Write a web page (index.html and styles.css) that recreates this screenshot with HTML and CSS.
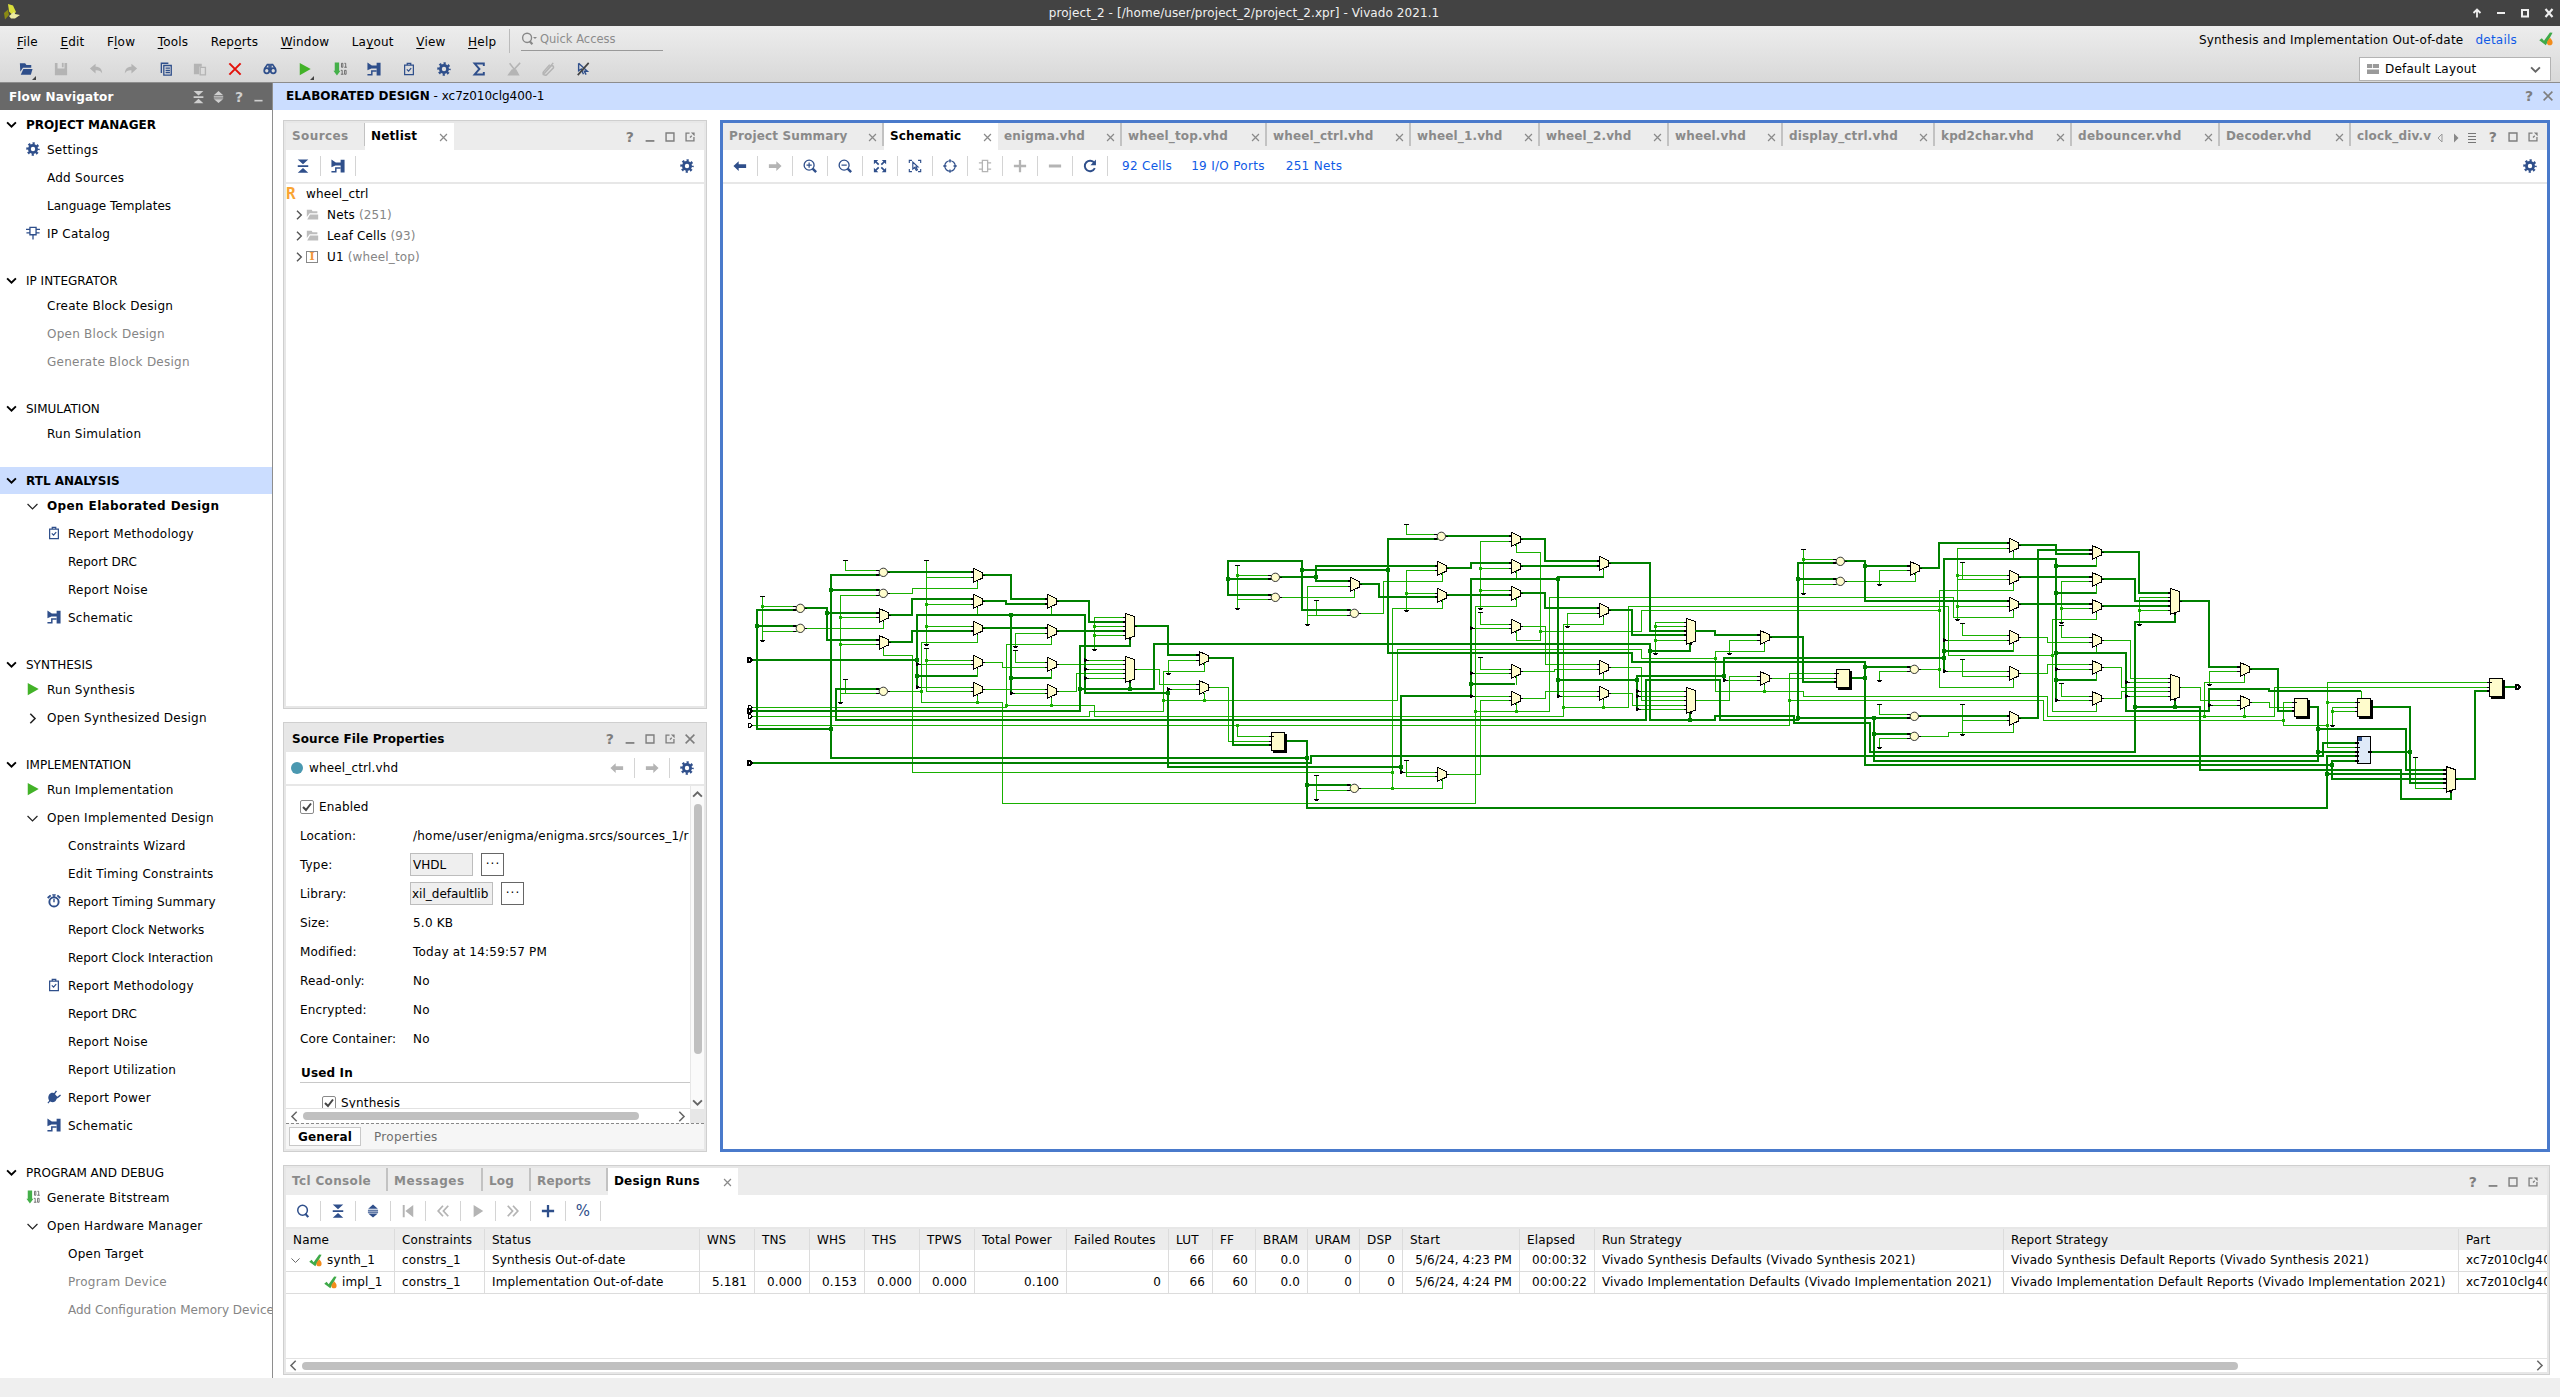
FILE: index.html
```html
<!DOCTYPE html>
<html lang="en">
<head>
<meta charset="utf-8">
<title>project_2 - Vivado 2021.1</title>
<link rel="stylesheet" href="styles.css">
</head>
<body>
<svg class="sprite" aria-hidden="true">
  <symbol id="gear" viewBox="0 0 16 16"><circle cx="8" cy="8" r="4.1" fill="none" stroke="currentColor" stroke-width="3.2"/><circle cx="8" cy="8" r="6.4" fill="none" stroke="currentColor" stroke-width="2.6" stroke-dasharray="2.51 2.51" stroke-dashoffset="1.25"/></symbol>
  <symbol id="chip" viewBox="0 0 16 16"><path d="M4.500 1.500h7v8.500h-7zM8 10v5.500M0 3.800h4.500M11.500 3.800H16M.5 7.800h4M11.500 7.800h4" fill="none" stroke="currentColor" stroke-width="1.500"/></symbol>
  <symbol id="clip" viewBox="0 0 16 16"><path d="M3 3.500h10v11H3zM6 1.500h4v2H6zM5.500 8.500l2 2 3-3.500" fill="none" stroke="currentColor" stroke-width="1.400"/></symbol>
  <symbol id="schem" viewBox="0 0 16 16"><path d="M.5.5L5.500 4H11V.8h4.500v14.700H11V7.500H5L.5 9.500z" fill="currentColor"/><path d="M.5 14.500h5v-4.300H11" fill="none" stroke="currentColor" stroke-width="1.700"/></symbol>
  <symbol id="play" viewBox="0 0 16 16"><path d="M2 1l12.500 7L2 15z" fill="#42b228"/></symbol>
  <symbol id="bits" viewBox="0 0 16 16"><path d="M2 .5h5v9.500h1.500l-4 5.500L.5 10H2z" fill="#45b04a"/><path d="M9.700 1.500h1.600v4.500H9.700zM13 1.500h1.500v4.500M12.800 6h3M9 9.500h1.500V14M9 14h3M13.200 9.500h1.800V14h-1.800z" fill="none" stroke="#555" stroke-width=".9"/></symbol>
  <symbol id="clock" viewBox="0 0 16 16"><circle cx="8" cy="9" r="5.300" fill="none" stroke="currentColor" stroke-width="2.200"/><path d="M8 5.500V9.500M6 1h4M8 1v3" fill="none" stroke="currentColor" stroke-width="1.600"/><path d="M.8 4.600l3.400-3M15.200 4.600l-3.400-3" stroke="currentColor" stroke-width="2.200"/></symbol>
  <symbol id="plug" viewBox="0 0 16 16"><path d="M2.500 5c2-2.500 5-2.300 6.500-.5l3.500 4c-2 .5-1.500 5.500-6 5.500-2 0-3-.8-3-.8L1.500 15.500.5 14.500l2-2.300C1 9.500 1.200 7 2.500 5z" fill="currentColor"/><path d="M8 5l2.800-4M11.500 9l4-3.300" stroke="currentColor" stroke-width="1.600"/></symbol>
  <symbol id="down" viewBox="0 0 10 10"><path d="M1 3l4 4 4-4" fill="none" stroke="currentColor" stroke-width="1.700"/></symbol>
  <symbol id="down1" viewBox="0 0 10 10"><path d="M.5 2.700l4.500 4.500 4.500-4.500" fill="none" stroke="currentColor" stroke-width="1.100"/></symbol>
  <symbol id="right" viewBox="0 0 10 10"><path d="M3 .7l4.300 4.300L3 9.300" fill="none" stroke="currentColor" stroke-width="1.400"/></symbol>
  <symbol id="left" viewBox="0 0 10 10"><path d="M7 .7l-4.300 4.300L7 9.300" fill="none" stroke="currentColor" stroke-width="1.400"/></symbol>
  <symbol id="up" viewBox="0 0 10 10"><path d="M1 7l4-4 4 4" fill="none" stroke="currentColor" stroke-width="1.700"/></symbol>
  <symbol id="collapse" viewBox="0 0 16 16"><path d="M2 .5h12L8 6zM2 7h12v2.200H2zM2 15.700h12L8 10.200z" fill="currentColor"/></symbol>
  <symbol id="expand" viewBox="0 0 16 16"><path d="M8 .5l5.500 5h-11zM2.200 6.500h11.600v1.200H2.200zM2.200 8.700h11.600v1.200H2.200zM8 15.500l5.500-4.600h-11z" fill="currentColor"/></symbol>
  <symbol id="minus" viewBox="0 0 16 16"><path d="M3 12.500h10" stroke="currentColor" stroke-width="2"/></symbol>
  <symbol id="square" viewBox="0 0 16 16"><path d="M3.500 3.500h9v9h-9z" fill="none" stroke="currentColor" stroke-width="1.600"/></symbol>
  <symbol id="popout" viewBox="0 0 16 16"><path d="M7.500 3.500h-4v9h9V8M8 8.500l2-2" fill="none" stroke="currentColor" stroke-width="1.500"/><path d="M9 2.800h4.300v4.200z" fill="currentColor"/></symbol>
  <symbol id="x" viewBox="0 0 16 16"><path d="M3 3l10 10M13 3L3 13" fill="none" stroke="currentColor" stroke-width="1.800"/></symbol>
  <symbol id="aleft" viewBox="0 0 16 16"><path d="M.5 8l6-5.500V6H15v4.200H6.500v3.500z" fill="currentColor"/></symbol>
  <symbol id="aright" viewBox="0 0 16 16"><path d="M15.500 8l-6-5.500V6H1v4.200h8.500v3.500z" fill="currentColor"/></symbol>
  <symbol id="search" viewBox="0 0 16 16"><ellipse cx="7.500" cy="7.200" rx="5.500" ry="5.700" fill="none" stroke="currentColor" stroke-width="1.700"/><path d="M10.500 11l3.500 4" stroke="currentColor" stroke-width="2.600"/></symbol>
  <symbol id="zin" viewBox="0 0 16 16"><circle cx="7" cy="7" r="5.700" fill="none" stroke="currentColor" stroke-width="1.500"/><path d="M7 4v6M4 7h6" stroke="currentColor" stroke-width="1.400"/><path d="M11 11l4 4" stroke="currentColor" stroke-width="2.800"/></symbol>
  <symbol id="zout" viewBox="0 0 16 16"><circle cx="7" cy="7" r="5.700" fill="none" stroke="currentColor" stroke-width="1.500"/><path d="M4 7h6" stroke="currentColor" stroke-width="1.400"/><path d="M11 11l4 4" stroke="currentColor" stroke-width="2.800"/></symbol>
  <symbol id="fit" viewBox="0 0 16 16"><path d="M1 1h5L1 6zM15 1v5l-5-5zM1 15v-5l5 5zM15 15h-5l5-5z" fill="currentColor"/><path d="M2 2l4.500 4.500M14 2L9.500 6.500M2 14l4.500-4.500M14 14L9.500 9.500" stroke="currentColor" stroke-width="2"/></symbol>
  <symbol id="pick" viewBox="0 0 16 16"><path d="M1.500 4.500v-3h3M11.500 1.500h3v3M1.500 11.500v3h3M11.500 14.500h3v-3M5.500 3.500v8l2-1.800 2 3.500 1.300-.8-1.800-3.200h2.500z" fill="none" stroke="currentColor" stroke-width="1.300"/></symbol>
  <symbol id="target" viewBox="0 0 16 16"><circle cx="8" cy="8" r="6" fill="none" stroke="currentColor" stroke-width="1.400"/><path d="M8 .3v3.700M8 12v3.700M.3 8H4M12 8h3.700" stroke="currentColor" stroke-width="1.500"/></symbol>
  <symbol id="cell" viewBox="0 0 16 16"><path d="M5 1.500h6v13H5zM1 4.500h4M1 11.500h4M11 4.500h4M11 11.500h4" fill="none" stroke="currentColor" stroke-width="1.500"/></symbol>
  <symbol id="plus" viewBox="0 0 16 16"><path d="M8 1v14M1 8h14" stroke="currentColor" stroke-width="2.600"/></symbol>
  <symbol id="dash" viewBox="0 0 16 16"><path d="M1 8h14" stroke="currentColor" stroke-width="3.400"/></symbol>
  <symbol id="reload" viewBox="0 0 16 16"><path d="M13.500 10.500a6 6 0 1 1-.5-6" fill="none" stroke="currentColor" stroke-width="2.200"/><path d="M14.800 .5v6.500H8.500z" fill="currentColor"/></symbol>
  <symbol id="first" viewBox="0 0 16 16"><path d="M2 1h2.200v14H2zM14 1v14L5 8z" fill="currentColor"/></symbol>
  <symbol id="rew" viewBox="0 0 16 16"><path d="M8 2L2.500 8 8 14M14 2L8.500 8l5.500 6" fill="none" stroke="currentColor" stroke-width="2"/></symbol>
  <symbol id="ffw" viewBox="0 0 16 16"><path d="M8 2l5.500 6L8 14M2 2l5.500 6L2 14" fill="none" stroke="currentColor" stroke-width="2"/></symbol>
  <symbol id="step" viewBox="0 0 16 16"><path d="M3 1l11 7-11 7z" fill="currentColor"/></symbol>
  <symbol id="check" viewBox="0 0 16 16"><path d="M.3 9.500l2.900-2.300 2.500 2.800L12.500.5 15.500.8 7.800 15z" fill="#3faa49"/><path d="M12.500 6.500c2 2 3 3.500 3 5.400a3.200 3.200 0 0 1-6.400 0c0-1.800 1.600-2.600 3.400-5.400z" fill="#f28c1c"/></symbol>
  <symbol id="folder" viewBox="0 0 16 16"><path d="M1 2h6l1 2h6v2.500H4.500L1 11z" fill="#bdbdbd"/><path d="M5 8h10v6H1.500z" fill="#bdbdbd"/></symbol>
  <symbol id="open" viewBox="0 0 16 16"><path d="M1 1.500h6l1.500 2H14V6.500H4.500L1.500 11z" fill="currentColor"/><path d="M5 8h10.500L13.500 14.500H2z" fill="currentColor"/></symbol>
  <symbol id="save" viewBox="0 0 16 16"><path d="M1 1h3v6.500h8V1h3v14H1z" fill="currentColor"/><path d="M9 1h2v5H9z" fill="currentColor"/></symbol>
  <symbol id="undo" viewBox="0 0 16 16"><path d="M1 7.500L7.500 2v3.500c5 0 7.500 3 7.500 7.500-1.500-2.500-3.500-3.700-7.500-3.500V13z" fill="currentColor"/></symbol>
  <symbol id="redo" viewBox="0 0 16 16"><path d="M15 7.500L8.500 2v3.500C3.500 5.500 1 8.500 1 13c1.500-2.500 3.500-3.700 7.500-3.500V13z" fill="currentColor"/></symbol>
  <symbol id="copy" viewBox="0 0 16 16"><path d="M2.700 12.500V1.500h8" fill="none" stroke="currentColor" stroke-width="1.600"/><path d="M5.500 4h8.500v11H5.500zM7.500 7h5M7.500 9.500h5M7.500 12h5" fill="none" stroke="currentColor" stroke-width="1.500"/></symbol>
  <symbol id="paste" viewBox="0 0 16 16"><path d="M1 2h9v3.500H7V14H1z" fill="currentColor"/><path d="M8.200 6.200h6v8.500h-6z" fill="none" stroke="currentColor" stroke-width="1.500"/></symbol>
  <symbol id="bino" viewBox="0 0 16 16"><circle cx="4.300" cy="10" r="2.900" fill="none" stroke="currentColor" stroke-width="2"/><circle cx="11.700" cy="10" r="2.900" fill="none" stroke="currentColor" stroke-width="2"/><path d="M1.500 8L5 3h2v5h2V3h2l3.500 5" fill="none" stroke="currentColor" stroke-width="1.800"/></symbol>
  <symbol id="sigma" viewBox="0 0 16 16"><path d="M13.500 4.500V1.800H3L8.500 8 3 14.200h10.500V11.500" fill="none" stroke="currentColor" stroke-width="2.200"/></symbol>
  <symbol id="brush" viewBox="0 0 16 16"><path d="M3 1.500l7 9M2 14.500l4-5.500h4l3 5.500zM15 1L2 15" fill="currentColor" stroke="currentColor" stroke-width="1.700"/></symbol>
  <symbol id="clipoff" viewBox="0 0 16 16"><path d="M4 13l8-9a2 2 0 0 1 2 3l-7 7a2 2 0 0 1-4-3l7-8M14 1L2 15" fill="none" stroke="currentColor" stroke-width="1.700"/></symbol>
  <symbol id="cursoff" viewBox="0 0 16 16"><path d="M3 1.500l10 9H9.500l2 4M3 1.500V10l3-2 2.500 6" fill="none" stroke="#2f4f8b" stroke-width="1.600"/><path d="M14.500 1L2 15" stroke="#444" stroke-width="2"/></symbol>
</svg>

<header class="titlebar">
  <svg class="logo" viewBox="0 0 16 16"><path d="M4 0l5 1.500L12 8l-3 3.500-4-4z" fill="#d9de3b"/><path d="M0 9l4-3.500L5 11l-4 4.500z" fill="#8a8a14"/><path d="M5 12l5-4 1 2 5 1-5 3.500H7z" fill="#eceaa2"/></svg>
  <span>project_2 - [/home/user/project_2/project_2.xpr] - Vivado 2021.1</span>
  <div class="winbtns">
    <svg viewBox="0 0 10 10"><path d="M5 9.500V1M1.500 5L5 1.500 8.500 5" fill="none" stroke="#eee" stroke-width="1.800"/></svg>
    <svg viewBox="0 0 10 10"><path d="M1 5h8" stroke="#eee" stroke-width="2"/></svg>
    <svg viewBox="0 0 10 10"><path d="M2 2h6v6.500H2z" fill="none" stroke="#eee" stroke-width="2"/></svg>
    <svg viewBox="0 0 10 10"><path d="M1.500 1l7 8M8.500 1l-7 8" stroke="#eee" stroke-width="2.200"/></svg>
  </div>
</header>

<div class="topbar">
  <div class="topleft">
    <div class="menurow">
      <nav class="menu">
        <a><u>F</u>ile</a><a><u>E</u>dit</a><a>F<u>l</u>ow</a><a><u>T</u>ools</a><a>Rep<u>o</u>rts</a><a><u>W</u>indow</a><a>La<u>y</u>out</a><a><u>V</u>iew</a><a><u>H</u>elp</a>
      </nav>
      <div class="quick"><svg><use href="#search"/></svg><i></i><span>Quick Access</span></div>
    </div>
    <div class="maintools">
      <span class="drop"><svg><use href="#open"/></svg></span>
      <span class="off"><svg><use href="#save"/></svg></span>
      <span class="off"><svg><use href="#undo"/></svg></span>
      <span class="off"><svg><use href="#redo"/></svg></span>
      <span><svg><use href="#copy"/></svg></span>
      <span class="off"><svg><use href="#paste"/></svg></span>
      <span class="red"><svg><use href="#x"/></svg></span>
      <span><svg><use href="#bino"/></svg></span>
      <span class="drop"><svg><use href="#play"/></svg></span>
      <span><svg><use href="#bits"/></svg></span>
      <span><svg><use href="#schem"/></svg></span>
      <span><svg><use href="#clip"/></svg></span>
      <span><svg><use href="#gear"/></svg></span>
      <span><svg><use href="#sigma"/></svg></span>
      <span class="off"><svg><use href="#brush"/></svg></span>
      <span class="off"><svg><use href="#clipoff"/></svg></span>
      <span><svg><use href="#cursoff"/></svg></span>
    </div>
  </div>
  <div class="topright">
    <div class="state"><span>Synthesis and Implementation Out-of-date</span><a>details</a><svg><use href="#check"/></svg></div>
    <div class="layout"><svg class="lay" viewBox="0 0 12 10"><path d="M0 0h5v4H0zM5.800 0H12v4H5.800zM0 5.500h12V10H0z" fill="#9a9a9a"/></svg><span>Default Layout</span><svg class="chev"><use href="#down"/></svg></div>
  </div>
</div>

<div class="body">
  <aside class="nav">
    <div class="navhead"><b>Flow Navigator</b><svg><use href="#collapse"/></svg><svg><use href="#expand"/></svg><em>?</em><svg class="mn"><use href="#minus"/></svg></div>
    <div class="sections">
      <section><h3 class="bold"><svg><use href="#down"/></svg>PROJECT MANAGER</h3>
        <ul><li><svg><use href="#gear"/></svg>Settings</li><li>Add Sources</li><li class="tight">Language Templates</li><li><svg><use href="#chip"/></svg>IP Catalog</li></ul></section>
      <section><h3><svg><use href="#down"/></svg>IP INTEGRATOR</h3>
        <ul><li>Create Block Design</li><li class="dim">Open Block Design</li><li class="dim">Generate Block Design</li></ul></section>
      <section><h3><svg><use href="#down"/></svg>SIMULATION</h3>
        <ul><li>Run Simulation</li></ul></section>
      <section><h3 class="bold cur"><svg><use href="#down"/></svg>RTL ANALYSIS</h3>
        <ul><li class="bold tw"><svg><use href="#down1"/></svg>Open Elaborated Design</li><li class="sub"><svg><use href="#clip"/></svg>Report Methodology</li><li class="sub tight">Report DRC</li><li class="sub">Report Noise</li><li class="sub"><svg><use href="#schem"/></svg>Schematic</li></ul></section>
      <section><h3><svg><use href="#down"/></svg>SYNTHESIS</h3>
        <ul><li><svg><use href="#play"/></svg>Run Synthesis</li><li class="tw"><svg><use href="#right"/></svg>Open Synthesized Design</li></ul></section>
      <section><h3><svg><use href="#down"/></svg>IMPLEMENTATION</h3>
        <ul><li><svg><use href="#play"/></svg>Run Implementation</li><li class="tw"><svg><use href="#down1"/></svg>Open Implemented Design</li><li class="sub">Constraints Wizard</li><li class="sub">Edit Timing Constraints</li><li class="sub snug"><svg><use href="#clock"/></svg>Report Timing Summary</li><li class="sub tight">Report Clock Networks</li><li class="sub tight">Report Clock Interaction</li><li class="sub"><svg><use href="#clip"/></svg>Report Methodology</li><li class="sub tight">Report DRC</li><li class="sub">Report Noise</li><li class="sub">Report Utilization</li><li class="sub"><svg><use href="#plug"/></svg>Report Power</li><li class="sub"><svg><use href="#schem"/></svg>Schematic</li></ul></section>
      <section><h3><svg><use href="#down"/></svg>PROGRAM AND DEBUG</h3>
        <ul><li><svg><use href="#bits"/></svg>Generate Bitstream</li><li class="tw"><svg><use href="#down1"/></svg>Open Hardware Manager</li><li class="sub">Open Target</li><li class="sub dim">Program Device</li><li class="sub dim tight">Add Configuration Memory Device</li></ul></section>
    </div>
  </aside>

  <main class="work">
    <div class="designbar"><span><b>ELABORATED DESIGN</b> - xc7z010clg400-1</span><em>?</em><svg><use href="#x"/></svg></div>
    <div class="panes">
      <div class="leftcol">
        <section class="panel netlist">
          <div class="tabs"><div class="tab t-src">Sources</div><div class="tab on t-net">Netlist<svg><use href="#x"/></svg></div>
            <div class="ctl"><em>?</em><svg><use href="#minus"/></svg><svg><use href="#square"/></svg><svg><use href="#popout"/></svg></div></div>
          <div class="tools"><span><svg><use href="#collapse"/></svg></span><span><svg><use href="#schem"/></svg></span><svg class="cfg"><use href="#gear"/></svg></div>
          <ul class="tree">
            <li class="root"><b>R</b>wheel_ctrl</li>
            <li><svg class="tw"><use href="#right"/></svg><svg><use href="#folder"/></svg>Nets&nbsp;<i>(251)</i></li>
            <li><svg class="tw"><use href="#right"/></svg><svg><use href="#folder"/></svg>Leaf Cells&nbsp;<i>(93)</i></li>
            <li><svg class="tw"><use href="#right"/></svg><span class="inst">I</span>U1&nbsp;<i>(wheel_top)</i></li>
          </ul>
        </section>
        <section class="panel props">
          <div class="phead"><b>Source File Properties</b><div class="ctl"><em>?</em><svg><use href="#minus"/></svg><svg><use href="#square"/></svg><svg><use href="#popout"/></svg><svg><use href="#x"/></svg></div></div>
          <div class="pfile"><i class="dot"></i><span class="fname">wheel_ctrl.vhd</span><span class="btn"><svg><use href="#aleft"/></svg></span><span class="btn"><svg><use href="#aright"/></svg></span><svg class="cfg"><use href="#gear"/></svg></div>
          <div class="pbody">
            <div class="form">
              <label class="en"><i class="cb"><svg viewBox="0 0 14 14"><path d="M3 7l3 3 5-6.500" fill="none" stroke="#444" stroke-width="2"/></svg></i>Enabled</label>
              <dl>
                <dt>Location:</dt><dd>/home/user/enigma/enigma.srcs/sources_1/r</dd>
                <dt>Type:</dt><dd><span class="fld f1">VHDL</span><span class="dots">···</span></dd>
                <dt>Library:</dt><dd><span class="fld f2">xil_defaultlib</span><span class="dots">···</span></dd>
                <dt>Size:</dt><dd>5.0 KB</dd>
                <dt>Modified:</dt><dd>Today at 14:59:57 PM</dd>
                <dt>Read-only:</dt><dd>No</dd>
                <dt>Encrypted:</dt><dd>No</dd>
                <dt>Core Container:</dt><dd>No</dd>
              </dl>
              <h4>Used In</h4>
              <label class="syn"><i class="cb"><svg viewBox="0 0 14 14"><path d="M3 7l3 3 5-6.500" fill="none" stroke="#444" stroke-width="2"/></svg></i>Synthesis</label>
            </div>
            <div class="vbar"><svg><use href="#up"/></svg><i></i><svg><use href="#down"/></svg></div>
            <div class="hbar"><svg><use href="#left"/></svg><i></i><svg><use href="#right"/></svg></div>
            <div class="corner"></div>
          </div>
          <div class="ptabs"><b>General</b><span>Properties</span></div>
        </section>
      </div>

      <section class="panel schematic">
        <div class="tabs">
          <div class="files">
            <div class="tab w1">Project Summary<svg><use href="#x"/></svg></div>
            <div class="tab on w2">Schematic<svg><use href="#x"/></svg></div>
            <div class="tab w3">enigma.vhd<svg><use href="#x"/></svg></div>
            <div class="tab w4">wheel_top.vhd<svg><use href="#x"/></svg></div>
            <div class="tab w5">wheel_ctrl.vhd<svg><use href="#x"/></svg></div>
            <div class="tab w6">wheel_1.vhd<svg><use href="#x"/></svg></div>
            <div class="tab w6">wheel_2.vhd<svg><use href="#x"/></svg></div>
            <div class="tab w7">wheel.vhd<svg><use href="#x"/></svg></div>
            <div class="tab w8">display_ctrl.vhd<svg><use href="#x"/></svg></div>
            <div class="tab w9">kpd2char.vhd<svg><use href="#x"/></svg></div>
            <div class="tab w10">debouncer.vhd<svg><use href="#x"/></svg></div>
            <div class="tab w11">Decoder.vhd<svg><use href="#x"/></svg></div>
            <div class="tab w12">clock_div.v</div>
          </div>
          <div class="scrollers">
            <svg viewBox="0 0 10 10"><path d="M7 1v8L3 5z" fill="none" stroke="#999"/></svg>
            <svg viewBox="0 0 10 10"><path d="M3 .5v9L7.500 5z" fill="#888"/></svg>
            <svg viewBox="0 0 10 10"><path d="M1 .5h8M1 3.500h8M1 6.500h8M1 9.500h8" stroke="#777" stroke-width="1"/></svg>
          </div>
          <div class="ctl"><em>?</em><svg><use href="#square"/></svg><svg><use href="#popout"/></svg></div>
        </div>
        <div class="tools">
          <span><svg><use href="#aleft"/></svg></span><span class="off"><svg><use href="#aright"/></svg></span><span><svg><use href="#zin"/></svg></span><span><svg><use href="#zout"/></svg></span><span><svg><use href="#fit"/></svg></span><span><svg><use href="#pick"/></svg></span><span><svg><use href="#target"/></svg></span><span class="off"><svg><use href="#cell"/></svg></span><span class="off"><svg><use href="#plus"/></svg></span><span class="off"><svg><use href="#dash"/></svg></span><span><svg><use href="#reload"/></svg></span>
          <a class="l1">92 Cells</a><a class="l2">19 I/O Ports</a><a>251 Nets</a>
          <svg class="cfg"><use href="#gear"/></svg>
        </div>
        <svg id="sheet" viewBox="-21 -978 5472 2895"></svg>
      </section>

      <section class="panel runs">
        <div class="tabs"><div class="tab r1">Tcl Console</div><div class="tab r2">Messages</div><div class="tab r3">Log</div><div class="tab r4">Reports</div><div class="tab on r5">Design Runs<svg><use href="#x"/></svg></div>
          <div class="ctl"><em>?</em><svg><use href="#minus"/></svg><svg><use href="#square"/></svg><svg><use href="#popout"/></svg></div></div>
        <div class="tools">
          <span><svg><use href="#search"/></svg></span><span><svg><use href="#collapse"/></svg></span><span><svg><use href="#expand"/></svg></span><span class="off"><svg><use href="#first"/></svg></span><span class="off"><svg><use href="#rew"/></svg></span><span class="off"><svg><use href="#step"/></svg></span><span class="off"><svg><use href="#ffw"/></svg></span><span><svg><use href="#plus"/></svg></span><span class="pct">%</span>
        </div>
        <div class="tablewrap">
        <table>
          <colgroup><col class="c109"><col class="c90"><col class="c215"><col class="c55"><col class="c55"><col class="c55"><col class="c55"><col class="c55"><col class="c92"><col class="c102"><col class="c44"><col class="c43"><col class="c52"><col class="c52"><col class="c43"><col class="c117"><col class="c75"><col class="c409"><col class="c455"><col></colgroup>
          <thead><tr><th>Name</th><th>Constraints</th><th>Status</th><th>WNS</th><th>TNS</th><th>WHS</th><th>THS</th><th>TPWS</th><th>Total Power</th><th>Failed Routes</th><th>LUT</th><th>FF</th><th>BRAM</th><th>URAM</th><th>DSP</th><th>Start</th><th>Elapsed</th><th>Run Strategy</th><th>Report Strategy</th><th>Part</th></tr></thead>
          <tbody>
            <tr><td class="nm"><svg class="tw"><use href="#down1"/></svg><svg class="ck"><use href="#check"/></svg>synth_1</td><td>constrs_1</td><td>Synthesis Out-of-date</td><td></td><td></td><td></td><td></td><td></td><td></td><td></td><td class="n">66</td><td class="n">60</td><td class="n">0.0</td><td class="n">0</td><td class="n">0</td><td class="n">5/6/24, 4:23 PM</td><td class="n">00:00:32</td><td>Vivado Synthesis Defaults (Vivado Synthesis 2021)</td><td>Vivado Synthesis Default Reports (Vivado Synthesis 2021)</td><td>xc7z010clg400-1</td></tr>
            <tr><td class="nm deep"><svg class="ck"><use href="#check"/></svg>impl_1</td><td>constrs_1</td><td>Implementation Out-of-date</td><td class="n">5.181</td><td class="n">0.000</td><td class="n">0.153</td><td class="n">0.000</td><td class="n">0.000</td><td class="n">0.100</td><td class="n">0</td><td class="n">66</td><td class="n">60</td><td class="n">0.0</td><td class="n">0</td><td class="n">0</td><td class="n">5/6/24, 4:24 PM</td><td class="n">00:00:22</td><td>Vivado Implementation Defaults (Vivado Implementation 2021)</td><td>Vivado Implementation Default Reports (Vivado Implementation 2021)</td><td>xc7z010clg400-1</td></tr>
          </tbody>
        </table>
        </div>
        <div class="hbar"><svg><use href="#left"/></svg><i></i><svg><use href="#right"/></svg></div>
      </section>
    </div>
  </main>
</div>
<footer class="status"></footer>
<script src="schematic.js"></script>
</body>
</html>
```
FILE: schematic.js
```js
// Netlist drawing data, one entry per sheet column. Three units make one screen pixel.
const sheets = [
  {
    at: [0, 0],
    bus: "M81 657V300H198 M81 348H198 M81 657H303 M303 744V195H447 M303 240H447 M225 294H291V390H447 M291 309H447 M474 186H730 M1500 630H318V537H447 M478 315H546V267H730 M478 396H546V363H730 M760 195H843V267H952 M760 273H828V282H952 M760 354H952 M69 450H561 M561 535V315H1065V549H1314 M561 498H738 M843 315V550 M843 504H960 M982 273H1077V336H1186 M982 363H1186 M1200 388V408H1050V603H69 M1050 537H1272V402H1500 M1200 537V515 M1216 348H1314V435H1407 M1314 549V771H1500 M303 744H1500 M69 759H1500 M1438 444H1500",
    net: "M346 152V181H447 M97 260V395 M97 289H198 M97 364H198 M474 250H547V236H742V212 M331 577V256H447 M331 322H447 M331 403H447 M225 355H460V332 M460 412V436H547V787H1500 M346 508V550 M334 550H447 M589 152V403 M589 202H730 M589 283H730 M589 349H730 M742 292V315 M474 544H574V397H742V370 M574 544V577H817V880H1500 M742 577V555 M589 416V544H730 M589 451H730 M565 463H730 M565 532H730 M742 473V498 M760 457H817V472H952 M760 538H952 M856 408V370H952 M964 292V315 M964 380V403H829V592H69 M829 586H1093V619H1500 M964 586V560 M856 421V457H952 M846 550H952 M964 480V504 M982 463H1186 M982 544H1039V490H1186 M1093 418V322H1186 M1093 349H1186 M1093 376H1186 M1068 451H1186 M1068 478H1186 M1068 505H1186 M1216 478H1288V523H1407 M1315 490V451H1407 M1423 460V484H1300V604H1078V619H69 M1300 571H1500 M1423 571V549 M1318 538H1407 M1438 532H1495V694 M69 646H1500",
    adders: [[211,295],[211,355],[460,187],[460,250],[460,544]],
    mux: [[447,316],[447,397],[730,196],[730,274],[730,355],[730,457],[730,538],[952,274],[952,364],[952,463],[952,544],[1407,445],[1407,532]],
    wide: [[1186,349],[1186,478]],
    vcc: [[346,151],[97,259],[346,508],[589,151],[589,415],[856,421]],
    gnd: [[97,391],[331,577],[589,403],[856,409],[1093,418],[1315,490]],
    taps: [[561,463],[561,532],[843,550],[1065,451],[1065,478],[1065,505],[1314,538]],
    bj: [[303,240],[81,348],[291,309],[561,450],[561,498],[843,315],[843,504],[1050,537],[1200,537],[303,657],[1314,549]],
    nj: [[97,289],[331,322],[331,403],[589,283],[589,349],[589,451],[574,544],[742,577],[829,586],[964,586],[1093,349],[1093,376],[1300,571],[1423,571]],
    ports: [[54,592,0],[54,619,0],[54,646,0],[54,450,1],[54,603,1],[54,759,1]]
  },
  {
    at: [1440, 0],
    bus: "M54 207V153H276V300H420 M54 207V255H183 M54 207H183 M276 180H534 M210 201H318 M318 168V213H421 M318 168H682 M450 222H507V261H682 M534 429V87H681 M534 429H1266V456H1500 M708 78H904 M712 174H783V159H904 M712 255H904 M934 87H1005V153H1168 M934 168H1168 M934 249H1005V294H1168 M783 558V207H1044V558 M1044 207V201H1178 M783 522H913 M783 558H573V787 M1044 510H1281 M1500 498H1281V600 M1198 159H1320V363H1429 M1198 300H1266V375H1429 M0 402H1320V630H1500 M1320 423H1440V402 M1440 630V607 M0 630H1308V510H1500 M1458 363H1500 M0 444H69V705H184 M230 693H291V894H1500 M291 744H0 M0 759H303V738H1500 M0 771H573 M291 825H420",
    net: "M82 167V297 M82 196H183 M85 268H183 M210 262H433V239 M292 345V229H421 M319 271V316 M292 316H420 M446 310H520V214H697V190 M589 302V181H682 M589 250H682 M697 271V295H547V835 M0 787H547 M446 835H697V808 M589 44V73H681 M811 297V94H904 M811 175H904 M811 241H904 M919 103V127H991V391H919V365 M991 364H1294V301H1500 M919 184V207 M919 265V289H796V880H0 M811 308V343H904 M786 355H904 M934 349H1006V463H1168 M811 442V478H904 M786 490H904 M919 500V522 M934 484H1033V478H1168 M786 559H904 M712 793H811V571H904 M934 565H1006V544H1168 M796 604H1018V262H1500 M919 604V581 M1048 559H1168 M1072 350V310H1168 M1180 176V201 M1180 317V343H1060V619H0 M1060 592H1255V289H1500 M1180 592V566 M1180 488V510 M1198 472H1294V571H1429 M1198 550H1267V586H1429 M1336 430V337H1429 M1336 349H1429 M1336 391H1429 M1285 544H1429 M1285 559H1429 M1285 598H1429 M0 571H562V418H1294V445H1500 M0 532H55V694H184 M0 646H1500 M82 646V679H184 M589 751V799H682 M577 787H682 M319 797V868 M319 841H420",
    adders: [[196,202],[196,262],[433,310],[694,79],[433,835]],
    mux: [[421,223],[682,175],[682,256],[682,793],[904,88],[904,169],[904,250],[904,349],[904,484],[904,565],[1168,160],[1168,301],[1168,472],[1168,550]],
    wide: [[1429,364],[1429,571]],
    regs: [[184,667]],
    vcc: [[82,166],[319,271],[589,43],[811,307],[811,442],[589,751],[319,796]],
    gnd: [[82,295],[292,343],[589,301],[811,295],[1072,349],[1336,430],[319,868]],
    taps: [[783,355],[783,490],[783,559],[1044,559],[1281,544],[1281,559],[1281,598],[573,787]],
    bj: [[54,207],[276,180],[318,201],[534,180],[783,522],[1044,207],[1044,510],[1281,510],[1320,423],[1440,630],[291,744],[573,771],[291,825]],
    nj: [[82,196],[589,250],[811,175],[811,241],[991,364],[796,604],[919,604],[1060,592],[1180,592],[1336,349],[1336,391],[82,646],[547,787],[547,835]]
  },
  {
    at: [2880, 0],
    bus: "M18 363H75V375H210 M240 381H339V516H439 M0 456H525V765H1500 M525 471H660 M485 504H525 M0 498H102V444H762 M102 498V512 M0 510H90V630H324V159H438 M324 207H438 M0 630H75V618H312V639H540V726H1335V336H1455V312 M465 153H525V273H958 M525 168H660 M690 174H747V99H958 M762 485V147H1098V572 M762 423H966 M988 105H1098V132H1206 M988 201H1206 M988 282H1206 M988 624H1044V120H1206 M324 624H660 M552 624V753H1500 M552 672H660 M687 618H958 M1098 168H1216 M1098 249H1216 M1098 429H1308V603H1500 M1098 510H1216 M1236 126H1347V249H1441 M1236 207H1335V273H1441 M1236 288H1441 M1470 273H1557V471 M1335 591H1500 M1455 591V567 M0 738H1500 M0 894H1500",
    net: "M0 262H790V322H970V298 M0 289H775V436H1087 M0 301H748 M0 445H76 M223 397V424H76V544H340V559H1072V619H1500 M223 544V522 M118 430V391H210 M18 571H118V499H210 M106 511H210 M240 505H439 M0 646H298V490H439 M298 571H1060V631H1500 M340 119V250 M340 148H438 M343 223H438 M465 214H676V190 M568 225V181H660 M568 513V484H660 M687 478H748 M970 217V241H748V532H970V505 M802 328V115H958 M802 196H958 M802 208H958 M802 289H958 M817 157V208 M970 122V147 M817 340V376H958 M766 391H958 M988 382H1072V397H1206 M970 398V423 M766 484H958 M817 448V499H958 M988 490H1072V463H1206 M1114 335V214H1206 M1114 295H1206 M1219 142V168 M1219 223V249 M1219 304V328H1087V604H1219V581 M1114 346V382H1206 M1219 407V429 M1102 478H1206 M1219 488V510 M1114 520V559H1206 M1102 571H1206 M1236 391H1321V505H1441 M1236 472H1294V532H1441 M1236 565H1294V544H1441 M1312 517H1441 M1312 559H1441 M1348 343V262H1441 M1348 301H1441 M568 583V613H660 M568 712V685H660 M687 679H775V667H970V640 M817 583V673 M820 631H958",
    adders: [[451,154],[451,214],[673,478],[673,619],[673,679]],
    mux: [[210,382],[210,505],[660,175],[958,106],[958,202],[958,283],[958,382],[958,490],[958,625],[1206,127],[1206,208],[1206,289],[1206,391],[1206,472],[1206,565]],
    wide: [[1441,274],[1441,532]],
    regs: [[439,478]],
    vcc: [[340,118],[817,157],[817,340],[817,448],[1114,346],[1114,520],[568,583],[817,583]],
    gnd: [[118,430],[340,250],[568,223],[568,511],[802,328],[1114,337],[1348,343],[568,712],[817,673]],
    taps: [[102,511],[762,391],[762,484],[1098,478],[1098,571],[1308,517],[1308,559]],
    bj: [[102,498],[324,207],[324,624],[525,168],[525,471],[525,504],[552,624],[552,672],[762,423],[762,444],[1098,168],[1098,249],[1098,429],[1098,510],[1335,591],[1455,591]],
    nj: [[76,445],[223,544],[298,571],[340,148],[748,301],[748,478],[802,196],[802,289],[1087,436],[1114,295],[1348,301]]
  },
  {
    at: [4170, 330],
    bus: "M267 141H360 M390 147H474V273H523 M18 273H267V207H447V213H720 M45 261H240V450H843V537H993V515 M568 261H594V423H0 M594 327H858V450H978 M594 396H712 M0 408H609V369H712 M0 435H636V423H712 M636 435V477H978 M0 564H621V408H712 M621 462H978 M756 396H870 M758 261H870V489H978 M1008 477H1065V213H1108 M1150 201H1186 M0 396H45V261",
    net: "M185 202H241V241H360 M268 193V154H360 M374 163V187H253V289 M0 289H463V202H1108 M374 289V262 M270 256H360 M390 247H448V262H523 M0 301H490V247H523 M490 301V316H622V187H1108 M622 247H712 M622 316V382H712 M638 316V262H712 M638 274H712 M724 213V236 M886 412V505H978",
    adders: [],
    mux: [[360,148],[360,247]],
    wide: [[978,478]],
    regs: [[523,235],[712,235],[1108,175]],
    block: [712,349],
    vcc: [[886,412]],
    gnd: [[268,193],[638,316]],
    taps: [[267,256]],
    bj: [[594,327],[594,396],[636,435],[621,462],[870,396]],
    nj: [[253,289],[374,289],[490,301],[622,247],[622,316],[638,274]],
    ports: [[1188,201,1]]
  }
];

const inputs = s => [
  ...s.adders.map(([x, y]) => [x - 13, y - 14, y + 14]),
  ...s.mux.map(([x, y]) => [x, y - 20, y + 20]),
  ...s.wide.map(([x, y]) => [x, y - 40, y + 40]),
  ...(s.regs || []).map(([x, y]) => [x, y, y + 56]),
  ...(s.block ? [[s.block[0], s.block[1], s.block[1] + 82]] : [])
];

// Black pin stubs where a wire ends on a cell's left edge.
function stubs(d, s) {
  let out = "";
  for (const seg of d.split("M").filter(Boolean)) {
    let x = 0, y = 0;
    seg.replace(/^\s*([\d.]+) ([\d.]+)/, (m, a, b) => { x = +a; y = +b; return ""; })
       .replace(/([HV])([\d.]+)/g, (m, c, v) => { if (c === "H") x = +v; else y = +v; });
    if (inputs(s).some(([l, t, b]) => Math.abs(l - x) < 4 && y > t && y < b)) out += `M${x - 8} ${y}H${x + 1}`;
  }
  return out;
}

function draw(s) {
  let h = `<g transform="translate(${s.at})">`;
  h += `<path class="net" d="${s.net}"/><path class="bus" d="${s.bus}"/>`;
  s.nj.forEach(([x, y]) => h += `<rect class="nj" x="${x - 4.5}" y="${y - 4.5}" width="9" height="9"/>`);
  s.bj.forEach(([x, y]) => h += `<rect class="bj" x="${x - 6}" y="${y - 6}" width="12" height="12"/>`);
  h += `<path class="pinb" d="${stubs(s.bus, s)}"/><path class="pinn" d="${stubs(s.net, s)}"/>`;
  s.adders.forEach(([x, y]) => h += `<path class="pinn" d="M${x + 13} ${y}h7"/><circle class="adder" cx="${x}" cy="${y}" r="12.500"/>`);
  s.mux.forEach(([x, y]) => h += `<path class="pinn" d="M${x + 28} ${y - 1}h7M${x + 13} ${y + 13}v7"/><path class="cell" d="M${x + 1.5} ${y - 20}L${x + 28.5} ${y - 8}V${y + 8}L${x + 1.5} ${y + 20}Z"/>`);
  s.wide.forEach(([x, y]) => h += `<path class="pinn" d="M${x + 28} ${y - 1}h7"/><path class="pinb" d="M${x + 14} ${y + 32}v10"/><path class="cell" d="M${x + 1.5} ${y - 38}L${x + 28.5} ${y - 29}V${y + 29}L${x + 1.5} ${y + 38}Z"/>`);
  (s.regs || []).forEach(([x, y]) => h += `<rect x="${x + 6}" y="${y + 6}" width="41" height="56"/><rect class="cell" x="${x + 1}" y="${y + 1}" width="39" height="54"/><path class="pinn" d="M${x} ${y + 13}h8"/>`);
  if (s.block) {
    const [x, y] = s.block;
    h += `<rect class="block" x="${x + 1}" y="${y + 1}" width="39" height="81"/><rect class="mark" x="${x + 2}" y="${y + 3}" width="12" height="11"/>`;
    h += `<path class="pinb" d="M${x - 4} ${y + 20}h9M${x - 4} ${y + 47}h9M${x - 4} ${y + 59}h9M${x - 4} ${y + 74}h9M${x + 32} ${y + 47}h12"/><path class="pinn" d="M${x - 4} ${y + 33}h12"/>`;
  }
  s.vcc.forEach(([x, y]) => h += `<path class="pinn" d="M${x - 7} ${y}h15"/>`);
  s.gnd.forEach(([x, y]) => h += `<path class="pinn" d="M${x - 7} ${y}h15M${x - 4} ${y + 3}h9"/>`);
  s.taps.forEach(([x, y]) => h += `<path d="M${x - 3} ${y - 6}h3l6 4.500h6v3h-6l-6 4.500h-3z"/>`);
  (s.ports || []).forEach(([x, y, b]) => h += `<path class="${b ? "pb" : "pn"}" d="M${x} ${y - 5}h8l5 5-5 5h-8z"/>`);
  return h + "</g>";
}

document.getElementById("sheet").innerHTML = sheets.map(draw).join("");
```
FILE: styles.css
```css
* { box-sizing: border-box; }
html, body { margin: 0; height: 100%; }
body {
  display: flex; flex-direction: column; width: 2560px; height: 1397px; overflow: hidden;
  font: 12px/16px "DejaVu Sans", sans-serif; letter-spacing: .15px; color: #000; background: #fff; white-space: nowrap;
}
ul, dl, dd, h3, h4 { margin: 0; padding: 0; list-style: none; font-size: 12px; font-weight: normal; }
em { font-style: normal; font-weight: bold; font-size: 14px; color: #7e7e7e; text-align: center; }
svg { flex: none; display: block; width: 14px; height: 14px; color: #2f4f8b; }
.sprite { position: absolute; width: 0; height: 0; }
.bold { font-weight: bold; }

.titlebar { position: relative; flex: none; display: flex; align-items: center; justify-content: center; height: 26px; padding-right: 72px; background: #434343; color: #f0f0f0; letter-spacing: .08px; }
.titlebar .logo { position: absolute; left: 4px; top: 4px; width: 16px; height: 16px; }
.winbtns { position: absolute; right: 6px; top: 8px; display: flex; gap: 14px; }
.winbtns svg { width: 10px; height: 10px; }

.topbar { flex: none; display: flex; justify-content: space-between; height: 57px; border-bottom: 1px solid #8d8d8d; background: linear-gradient(#ededed, #d8d8d8); }
.menurow { display: flex; height: 29px; }
.menu { display: flex; width: 510px; height: 24px; margin-top: 3px; padding: 5px 0 0 17px; gap: 22.500px; border-right: 1px solid #bbb; letter-spacing: .2px; }
.menu u { text-underline-offset: 2px; }
.quick { display: flex; align-items: center; width: 142px; height: 21px; margin: 4px 0 0 11px; padding-bottom: 3px; border-bottom: 1px solid #999; color: #8c8c8c; font-size: 11.5px; letter-spacing: 0; }
.quick svg { width: 13px; height: 13px; color: #888; }
.quick i { width: 0; margin: 0 3px 0 -1px; border: 2px solid transparent; border-top: 2px solid #888; }
.maintools { display: flex; padding-left: 9px; height: 28px; }
.maintools span { position: relative; display: flex; align-items: center; justify-content: center; width: 34.8px; }
.off svg { color: #b4b4b4; }
.red svg { width: 18px; height: 18px; color: #e3120b; }
.drop::after { content: ""; position: absolute; right: 8px; bottom: 3px; border: 2.5px solid #444; border-top-color: transparent; border-left-color: transparent; }
.topright { display: flex; flex-direction: column; align-items: flex-end; padding: 6px 7px 0 0; letter-spacing: .22px; }
.state { display: flex; height: 18px; }
.state a, .tools a { color: #0f5ae6; }
.state a { margin: 0 22px 0 12px; }
.layout { display: flex; align-items: center; width: 192px; height: 24px; margin: 7px 2px 0 0; padding: 0 9px 0 7px; border: 1px solid #b3b3b3; background: #fff; }
.layout .lay { width: 12px; height: 10px; margin-right: 6px; }
.layout .chev { width: 11px; height: 11px; margin-left: auto; color: #666; }

.body { display: flex; flex: 1; min-height: 0; }
.nav { flex: none; width: 273px; border-right: 1px solid #8e8e8e; overflow: hidden; }
.navhead { display: flex; align-items: center; height: 27px; padding: 0 0 0 9px; background: #696969; color: #fff; }
.navhead b { width: 186px; }
.navhead svg, .navhead em { width: 14px; height: 14px; margin-right: 6px; color: #cfcfcf; line-height: 14px; }
.navhead svg { width: 13px; margin-right: 7px; }
.sections { padding-top: 1px; }
.sections section { margin-bottom: 19px; }
h3 { display: flex; align-items: center; height: 27px; padding-left: 6px; letter-spacing: 0; }
h3 svg { width: 11px; height: 11px; margin-right: 9px; color: #000; }
.cur { background: #cbddff; }
.nav ul { margin-top: -2px; }
.nav li { display: flex; align-items: center; height: 28px; padding-left: 47px; letter-spacing: .25px; }
.nav li.tight { letter-spacing: 0; }
.nav li.snug { letter-spacing: .08px; }
.nav li.bold { letter-spacing: .38px; }
.nav li.sub { padding-left: 68px; }
.nav li svg { margin: -2px 7px 0 -21px; }
.nav li.tw svg { width: 11px; height: 11px; margin: 0 9px 0 -20px; color: #222; }
.dim { color: #858585; }

.work { flex: 1; display: flex; flex-direction: column; min-width: 0; }
.designbar { flex: none; display: flex; align-items: center; height: 27px; padding: 0 5px 2px 13px; background: #cbddff; letter-spacing: 0; }
.designbar em { margin-left: auto; width: 20px; }
.designbar svg { color: #7e7e7e; margin-left: 2px; }
.panes { flex: 1; display: grid; grid-template: 1032px 210px / 424px 1830px; gap: 13px; padding: 10px 10px 3px; }
.leftcol { display: grid; grid-template-rows: 589px 430px; gap: 13px; }
.panel { display: flex; flex-direction: column; min-width: 0; min-height: 0; overflow: hidden; padding: 2px; border: 1px solid #cfcfcf; background: #e7e7e7; }
.panel > * { background-color: #fff; }
.panel.schematic { padding: 0; border: 3px solid #4a7acb; }
.runs { grid-column: 1 / 3; }

.panel > .tabs { flex: none; display: flex; height: 27px; background: #ececec; }
.files { display: flex; width: 1710px; overflow: hidden; }
.tab { flex: none; position: relative; display: flex; align-items: center; height: 23px; padding: 3px 4px 0 6px; border-right: 2px solid #c2c2c2; font-weight: bold; color: #8a8a8a; }
.tab.on { height: 27px; padding-bottom: 4px; border-right: 0; background: #fff; color: #000; }
.tab svg { width: 11px; height: 11px; margin: 3px 0 0 auto; color: #8a8a8a; }
.tab.on svg { margin-right: 1px; }
.t-src { width: 79px; border-width: 1px; letter-spacing: .4px; } .t-net { width: 89px; }
.w1 { width: 161px; } .w2 { width: 114px; } .w3 { width: 124px; } .w4 { width: 145px; } .w5 { width: 144px; } .w6 { width: 129px; } .w7 { width: 114px; } .w8 { width: 152px; } .w9 { width: 137px; } .w10 { width: 148px; letter-spacing: .3px; } .w11 { width: 131px; } .w12 { width: 120px; border: 0; }
.r1 { width: 102px; letter-spacing: .35px; } .r2 { width: 95px; letter-spacing: .55px; } .r3 { width: 48px; } .r4 { width: 77px; } .r5 { width: 130px; }
.scrollers { display: flex; align-items: center; gap: 6px; padding: 2px 0 0 2px; }
.scrollers svg { width: 10px; height: 10px; }
.ctl { display: flex; align-items: center; margin-left: auto; padding-right: 4px; }
.ctl svg { width: 14px; height: 14px; margin: 0 3px; color: #7e7e7e; }
.ctl em { width: 20px; }

.tools { flex: none; display: flex; align-items: center; height: 34px; border-bottom: 2px solid #e7e7e7; }
.tools span { display: flex; align-items: center; justify-content: center; width: 35px; height: 20px; border-right: 1px solid #d4d4d4; }
.cfg { margin: 0 10px 0 auto; }
.tools a { margin-right: 21px; letter-spacing: .3px; }
.tools .l1 { margin-left: 14px; margin-right: 19px; }
.tools .pct { font-size: 15px; color: #2f4f8b; font-weight: normal; }
.tree { flex: 1; }
.tree li { display: flex; align-items: center; height: 21px; padding-left: 8px; }
.tree .root { padding-left: 0; height: 20px; }
.tree .root b { width: 20px; color: #f9a534; font: bold 16px/16px "DejaVu Sans Mono", monospace; }
.tree i { font-style: normal; color: #858585; }
.tree svg { width: 13px; height: 13px; margin-right: 8px; }
.tree .tw { width: 10px; height: 10px; margin-right: 2px; color: #555; }
.inst { width: 12px; height: 12px; margin-right: 9px; border: 1px solid #888; color: #f2963c; font: bold 11px/10px "DejaVu Serif", serif; text-align: center; letter-spacing: 0; }

.panel > .phead { flex: none; display: flex; height: 27px; padding-left: 6px; align-items: center; background: #e7e7e7; }
.phead b { letter-spacing: .1px; }
.pfile { flex: none; display: flex; align-items: center; height: 34px; padding-left: 5px; border-bottom: 2px solid #e7e7e7; }
.dot { width: 12px; height: 12px; margin-right: 6px; border-radius: 50%; background: #4a98b0; }
.fname { margin-right: auto; }
.pfile .btn { display: flex; align-items: center; justify-content: center; width: 35px; height: 20px; border-right: 1px solid #d4d4d4; }
.pfile .btn svg { color: #b4b4b4; }
.pfile .cfg { margin-left: 10px; }
.pbody { display: grid; grid-template: 323px 14px / 404px 14px; height: 337px; }
.form { overflow: hidden; padding: 7px 0 0 14px; border-bottom: 1px solid #e2e2e2; }
.form label { display: flex; align-items: center; height: 28px; }
.cb { width: 14px; height: 14px; margin-right: 5px; border: 1px solid #8a8a8a; border-radius: 2px; background: #fff; }
.cb svg { margin: -1px; }
.form dl { display: grid; grid-template-columns: 113px 1fr; grid-auto-rows: 29px; align-items: center; }
.form dd { display: flex; align-items: center; letter-spacing: .22px; }
.fld { height: 23px; margin-left: -3px; padding: 3px 0 0 2px; border: 1px solid #bdbdbd; background: #efefef; letter-spacing: 0; }
.f1 { width: 63px; } .f2 { width: 83px; padding-left: 1px; }
.dots { width: 23px; height: 23px; margin-left: 8px; border: 1px solid #666; text-align: center; line-height: 21px; letter-spacing: 1px; padding-left: 1px; }
.form h4 { margin: 5px 0 6px; padding: 7px 0 2px 1px; height: 25px; border-bottom: 1px solid #c8c8c8; font-weight: bold; }
.form .syn { padding-left: 22px; height: 27px; }
.vbar { display: flex; flex-direction: column; align-items: center; border-left: 1px solid #e7e7e7; background: #fafafa; padding: 3px 0 1px; justify-content: space-between; }
.vbar i { width: 8px; height: 250px; margin-bottom: 40px; border-radius: 4px; background: #c0c0c0; }
.vbar svg, .hbar svg { width: 11px; height: 11px; color: #666; }
.hbar { display: flex; align-items: center; padding: 0 3px; height: 14px; }
.hbar i { width: 336px; height: 8px; margin-left: 3px; border-radius: 4px; background: #c0c0c0; }
.hbar svg:last-child { margin-left: auto; }
.corner { background: #e7e7e7; }
.panel > .ptabs { flex: 1; display: flex; align-items: center; padding: 0 3px; border-top: 1px dashed #888; background: #f6f6f6; border-bottom: 0; }
.ptabs b { width: 72px; height: 19px; border: 1px solid #c8c8c8; background: #fff; text-align: center; line-height: 18px; }
.ptabs span { margin-left: 13px; color: #6e6e6e; letter-spacing: .3px; }

#sheet { width: 1824px; height: 965px; shape-rendering: crispEdges; }
.net, .bus { fill: none; stroke: #18b000; stroke-width: 3; stroke-linecap: square; }
.bus { stroke: #008000; stroke-width: 6; }
.nj { fill: #18b000; } .bj { fill: #008000; }
.pinb, .pinn { fill: none; stroke: #000; stroke-width: 6; }
.pinn { stroke-width: 3; }
.cell { fill: #fffccc; stroke: #000; stroke-width: 3; }
.adder { fill: #fffccc; stroke: #333; stroke-width: 3; shape-rendering: auto; }
.block { fill: #dfeaf8; stroke: #000; stroke-width: 3; } .mark { fill: #2f4f8b; }
.pb { fill: #fff; stroke: #000; stroke-width: 6; } .pn { fill: #fff; stroke: #000; stroke-width: 3; }

.tablewrap { flex: 1; overflow: hidden; }
table { width: 2261px; table-layout: fixed; border-collapse: separate; border-spacing: 0; }
th, td { height: 22px; padding: 0 7px; border-right: 1px solid #dcdcdc; overflow: hidden; text-align: left; font-weight: normal; line-height: 16px; }
th { height: 21px; background: #ececec; }
td { border-bottom: 1px solid #dcdcdc; padding-bottom: 1px; }
th:last-child, td:last-child { border-right: 0; padding-right: 0; }
td.n { text-align: right; padding-right: 7px; }
td.nm { display: flex; align-items: center; padding-left: 5px; }
td.nm .tw { width: 9px; height: 9px; margin-right: 9px; color: #666; }
td.nm .ck { width: 13px; height: 13px; margin-right: 5px; }
td.deep { padding-left: 38px; }
.c109 { width: 109px; } .c90 { width: 90px; } .c215 { width: 215px; } .c55 { width: 55px; } .c92 { width: 92px; } .c102 { width: 102px; } .c44 { width: 44px; } .c43 { width: 43px; } .c52 { width: 52px; } .c117 { width: 117px; } .c75 { width: 75px; } .c409 { width: 409px; } .c455 { width: 455px; }
.runs .hbar { flex: none; border-top: 1px solid #e2e2e2; padding: 0 2px; }
.runs .hbar i { width: 1936px; }
.status { flex: none; height: 19px; background: #efefef; }
```
